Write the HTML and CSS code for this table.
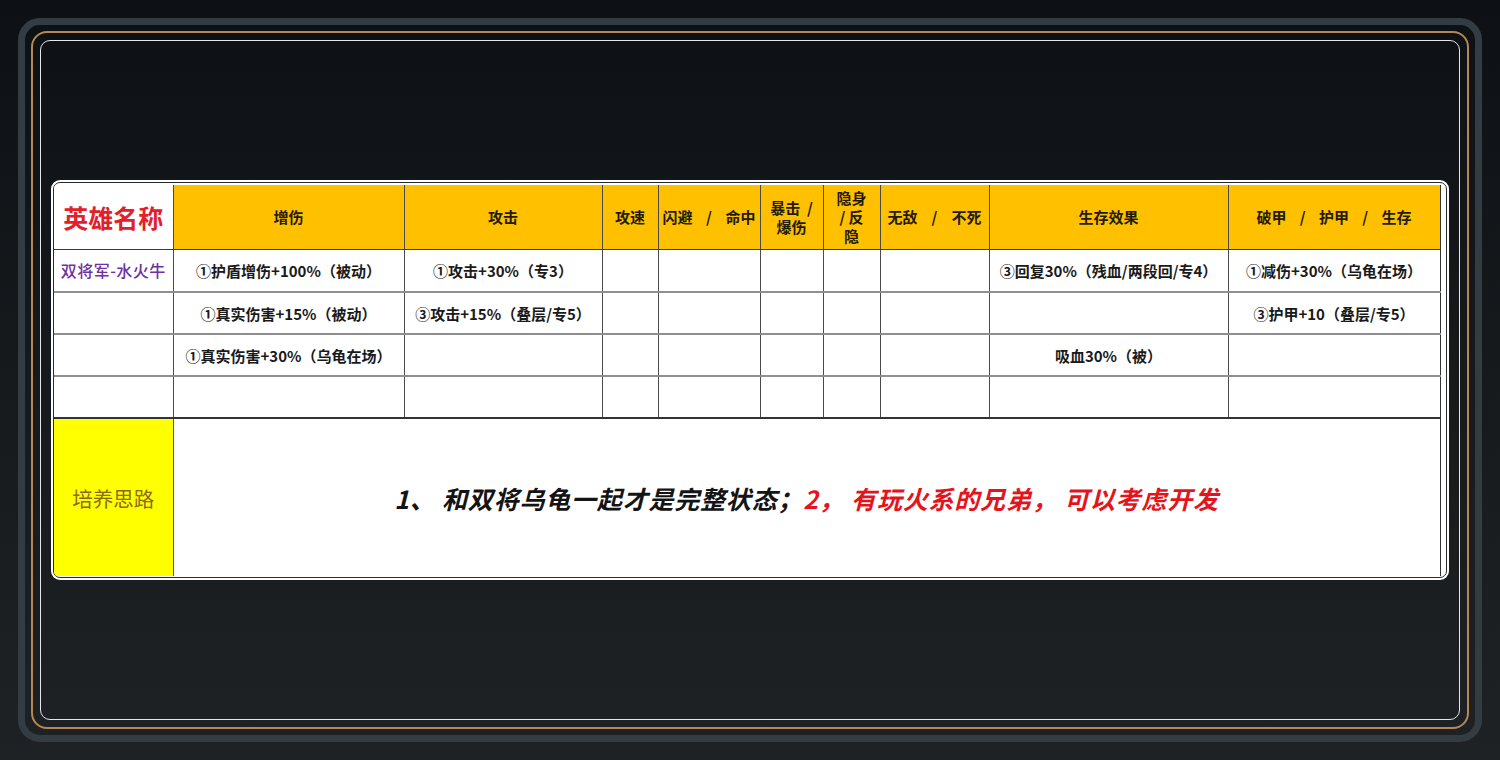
FILE: index.html
```html
<!DOCTYPE html>
<html lang="zh-CN">
<head>
<meta charset="utf-8">
<title>双将军-水火牛</title>
<link rel="stylesheet" href="styles.css">
</head>
<body>
<div class="frame">
  <div class="gold">
    <div class="inner">
      <div class="sheet">
        <div class="sheet-in">
          <table class="grid">
            <colgroup>
              <col class="c1"><col class="c2"><col class="c3"><col class="c4"><col class="c5">
              <col class="c6"><col class="c7"><col class="c8"><col class="c9"><col class="c10">
            </colgroup>
            <tr class="head">
              <td class="name-head">英雄名称</td>
              <td>增伤</td>
              <td>攻击</td>
              <td>攻速</td>
              <td><div class="spread"><span>闪避</span><span>/</span><span>命中</span></div></td>
              <td class="wrap">暴击 &nbsp;/<br>爆伤</td>
              <td class="wrap">隐身<br>/ 反<br>隐</td>
              <td><div class="spread pad6"><span>无敌</span><span>/</span><span>不死</span></div></td>
              <td>生存效果</td>
              <td><div class="spread pad28"><span>破甲</span><span>/</span><span>护甲</span><span>/</span><span>生存</span></div></td>
            </tr>
            <tr class="r1">
              <td class="hero">双将军-水火牛</td>
              <td>①护盾增伤+100%（被动）</td>
              <td>①攻击+30%（专3）</td>
              <td></td><td></td><td></td><td></td><td></td>
              <td>③回复30%（残血/两段回/专4）</td>
              <td>①减伤+30%（乌龟在场）</td>
            </tr>
            <tr class="r2">
              <td></td>
              <td>①真实伤害+15%（被动）</td>
              <td>③攻击+15%（叠层/专5）</td>
              <td></td><td></td><td></td><td></td><td></td>
              <td></td>
              <td>③护甲+10（叠层/专5）</td>
            </tr>
            <tr class="r3">
              <td></td>
              <td>①真实伤害+30%（乌龟在场）</td>
              <td></td>
              <td></td><td></td><td></td><td></td><td></td>
              <td>吸血30%（被）</td>
              <td></td>
            </tr>
            <tr class="r4">
              <td></td><td></td><td></td><td></td><td></td>
              <td></td><td></td><td></td><td></td><td></td>
            </tr>
            <tr class="plan">
              <td class="plan-label">培养思路</td>
              <td class="plan-text" colspan="9"><span class="dark">1、 和双将乌龟一起才是完整状态；</span><span class="red">2， 有玩火系的兄弟， 可以考虑开发</span></td>
            </tr>
          </table>
        </div>
      </div>
    </div>
  </div>
</div>
</body>
</html>
```
FILE: styles.css
```css
* { box-sizing: border-box; }
html, body { margin: 0; padding: 0; }
body {
  width: 1500px;
  height: 760px;
  overflow: hidden;
  background: linear-gradient(180deg, #0d1115 0%, #15191c 45%, #1f2225 100%);
  font-family: "Noto Sans CJK SC", "Noto Sans", sans-serif;
  padding: 18px;
}
.frame {
  width: 1464px;
  height: 724px;
  border: 7px solid #333c43;
  border-radius: 22px;
  padding: 6px;
}
.gold {
  height: 100%;
  border: 2px solid #b58752;
  border-radius: 16px;
  padding: 7px;
}
.inner {
  height: 100%;
  border: 1px solid #e6e6e6;
  border-radius: 10px;
  display: flex;
  align-items: center;
  padding-left: 10px;
}
.sheet {
  width: 1398px;
  height: 400px;
  background: #fff;
  border-radius: 9px;
  padding: 2px;
}
.sheet-in {
  height: 100%;
  border: 1px solid #2b2b2b;
  border-radius: 7px;
  background: #fff;
  padding: 2px 6px 0 0;
  overflow: hidden;
}
.grid {
  width: 1386px;
  border-collapse: collapse;
  table-layout: fixed;
  color: #1a1a1a;
}
.c1 { width: 119px; }
.c2 { width: 231px; }
.c3 { width: 198px; }
.c4 { width: 56px; }
.c5 { width: 102px; }
.c6 { width: 63px; }
.c7 { width: 57px; }
.c8 { width: 109px; }
.c9 { width: 239px; }
.c10 { width: 212px; }
.grid td {
  padding: 0 3px;
  text-align: center;
  vertical-align: middle;
  white-space: nowrap;
  font-size: 15px;
  font-weight: 700;
  border-right: 1px solid #4a4a4a;
  border-bottom: 2px solid #8f8f8f;
  overflow: hidden;
}
.grid td:last-child { border-right: 1px solid #333; }
.head td {
  background: #ffc000;
  height: 64px;
  border-bottom: 1px solid #3a3a3a;
  font-size: 15px;
  color: #231a00;
}
.grid .head td.name-head {
  background: #fff;
  color: #e3202a;
  font-size: 25px;
  font-weight: 700;
}
.head td.wrap {
  white-space: normal;
  line-height: 19px;
  padding: 0 2px;
}
.spread {
  display: flex;
  justify-content: space-between;
  padding: 0 1px;
}
.spread.pad6 { padding: 0 4px; }
.spread.pad28 { padding: 0 25px; }
.r1 td { height: 43px; }
.r2 td, .r3 td { height: 42px; }
.r4 td { height: 42px; border-bottom: 2px solid #333; }
.grid td.hero {
  color: #7030a0;
  font-size: 16px;
  font-weight: 500;
  letter-spacing: 0.5px;
}
.plan td { height: 158px; border-bottom: none; }
.grid td.plan-label {
  background: #ffff00;
  color: #8a6a1a;
  font-size: 20.5px;
  font-weight: 400;
  border-right: 1px solid #555;
}
.grid td.plan-text {
  font-size: 25px;
  font-style: italic;
  font-weight: 700;
  letter-spacing: 0.8px;
}
.dark { color: #141414; }
.red { color: #e5141c; }
```
